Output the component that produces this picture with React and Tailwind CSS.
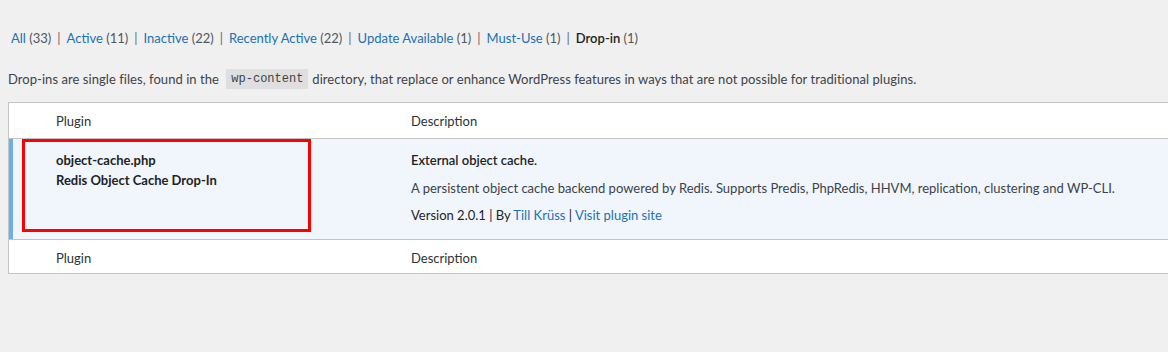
import React from "react";

const font = { fontFamily: "Lato, 'Noto Sans', sans-serif" };

function Sep() {
  return <span className="px-[6px] text-[#646970]">|</span>;
}

function FilterLink({ label, count, current }) {
  return current ? (
    <span>
      <span className="font-semibold text-[#1d2327]">{label}</span>{" "}
      <span className="text-[#50575e]">({count})</span>
    </span>
  ) : (
    <span className="text-[#2271b1]">
      {label} <span className="text-[#50575e]">({count})</span>
    </span>
  );
}

export default function App() {
  const filters = [
    ["All", 33],
    ["Active", 11],
    ["Inactive", 22],
    ["Recently Active", 22],
    ["Update Available", 1],
    ["Must-Use", 1],
  ];
  return (
    <div
      className="w-[1168px] h-[352px] overflow-hidden bg-[#f0f0f1] pl-[8px] pt-[28px] text-[13px] text-[#3c434a]"
      style={font}
    >
      <div className="h-[20px] leading-[20px] pl-[3px] whitespace-pre text-[#646970]">
        {filters.map(([l, c]) => (
          <React.Fragment key={l}>
            <FilterLink label={l} count={c} />
            <Sep />
          </React.Fragment>
        ))}
        <FilterLink label="Drop-in" count={1} current />
      </div>

      <p className="mt-[21px] h-[20px] leading-[20px] flex items-center whitespace-pre tracking-[0.05px]">
        Drop-ins are single files, found in the{" "}
        <code
          className="bg-[#dfdfe0] px-[5px] h-[20px] leading-[20px] text-[12px] text-[#3c434a] mx-[4px] tracking-normal"
          style={{ fontFamily: "'Liberation Mono', 'DejaVu Sans Mono', monospace" }}
        >
          wp-content
        </code>{" "}
        directory, that replace or enhance WordPress features in ways that are not possible for traditional plugins.
      </p>

      <div className="mt-[13px] w-[1200px] border border-[#c3c4c7] bg-white">
        <div className="flex h-[36px] items-center pt-[2px] border-b border-[#c3c4c7] text-[#2c3338]">
          <div className="w-[37px]" />
          <div className="w-[355px] pl-[10px]">Plugin</div>
          <div className="pl-[10px]">Description</div>
        </div>

        <div className="relative flex h-[100px] bg-[#f0f6fc]">
          <div className="w-[37px] border-l-4 border-[#72aee6]" />
          <div className="w-[355px] pl-[10px] pt-[11px] leading-[20px] font-bold text-[#1d2327]">
            <div>object-cache.php</div>
            <div>Redis Object Cache Drop-In</div>
          </div>
          <div className="pl-[10px] pt-[11px] leading-[20px]">
            <p className="font-semibold text-[#1d2327]">External object cache.</p>
            <p className="mt-[8px]">
              A persistent object cache backend powered by Redis. Supports Predis, PhpRedis, HHVM, replication, clustering and WP-CLI.
            </p>
            <p className="mt-[7px] text-[#1d2327]">
              Version 2.0.1 | By <span className="text-[#2271b1]">Till Krüss</span> |{" "}
              <span className="text-[#2271b1]">Visit plugin site</span>
            </p>
          </div>
          <div className="absolute left-[13px] top-0 w-[289px] h-[93px] border-[3px] border-[#ff0000]" />
        </div>

        <div className="flex h-[34px] items-center pt-[4px] border-t border-[#c3c4c7] text-[#2c3338]">
          <div className="w-[37px]" />
          <div className="w-[355px] pl-[10px]">Plugin</div>
          <div className="pl-[10px]">Description</div>
        </div>
      </div>
    </div>
  );
}
